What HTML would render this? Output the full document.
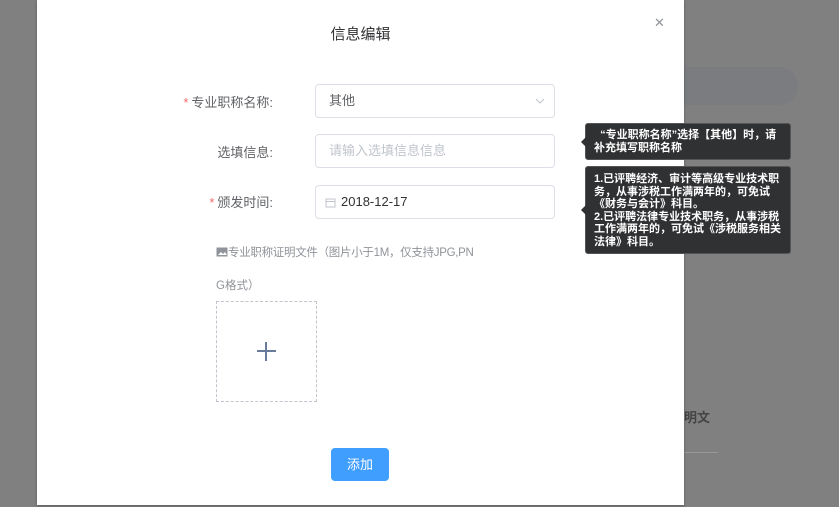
<!DOCTYPE html>
<html><head><meta charset="utf-8"><style>
*{margin:0;padding:0;box-sizing:border-box}
body{width:839px;height:507px;background:#808080;position:relative;overflow:hidden;font-family:"Liberation Sans","Noto Sans CJK SC",sans-serif;}
.a{position:absolute}
.modal{left:37px;top:0;width:647px;height:505px;background:#fff;box-shadow:0 1px 3px rgba(0,0,0,.3)}
.lbl{font-size:13px;color:#606266;text-align:right;width:120px}
.req{color:#f56c6c;margin-right:3px}
.inp{border:1px solid #dcdfe6;border-radius:4px;width:240px;height:34px;background:#fff;font-size:13px;line-height:32px;padding-left:13px;color:#606266}
.tip{background:#303133;color:#fff;font-size:11px;line-height:12.5px;border-radius:3px;padding:5px 8px;font-weight:bold;border:1px solid #555}
.tip:before{content:"";position:absolute;left:-5px;top:50%;margin-top:-5px;border:5px solid transparent;border-left:0;border-right-color:#303133}
</style></head><body>
<div class="a" style="left:684px;top:67px;width:114px;height:38px;background:#7b7c80;border-radius:0 19px 19px 0"></div>
<div class="a" style="left:684px;top:407px;font-size:13px;color:#444;font-weight:bold">明文</div>
<div class="a" style="left:684px;top:452px;width:34px;height:1px;background:#999"></div>
<div class="a modal"></div>
<div class="a" style="left:0;width:721px;top:23px;text-align:center;font-size:15px;color:#303133">信息编辑</div>
<div class="a" style="left:654px;top:15px;font-size:13px;color:#909399">✕</div>

<div class="a lbl" style="left:153px;top:92px"><span class="req">*</span>专业职称名称:</div>
<div class="a inp" style="left:315px;top:84px">其他<svg class="a" style="right:9px;top:12px" width="10" height="8"><path d="M1 2l4 4 4-4" stroke="#c0c4cc" fill="none"/></svg></div>

<div class="a lbl" style="left:153px;top:142px">选填信息:</div>
<div class="a inp" style="left:315px;top:134px;color:#c0c4cc">请输入选填信息信息</div>

<div class="a lbl" style="left:153px;top:192px"><span class="req">*</span>颁发时间:</div>
<div class="a inp" style="left:315px;top:185px;padding-left:25px;color:#303133">2018-12-17<svg class="a" style="left:9px;top:11px" width="11" height="11"><rect x="1" y="2" width="9" height="8" fill="none" stroke="#c0c4cc"/><path d="M1 4.5h9" stroke="#c0c4cc"/></svg></div>

<div class="a" style="left:216px;top:244px;font-size:11.5px;color:#909399;letter-spacing:-0.3px;white-space:nowrap"><svg width="12" height="10" style="vertical-align:-1px"><rect x="0.5" y="0.5" width="11" height="9" fill="#909399"/><path d="M2 8l3-3 2 2 2-2 2 3z" fill="#fff"/></svg>专业职称证明文件（图片小于1M，仅支持JPG,PN</div>
<div class="a" style="left:216px;top:277px;font-size:11.5px;color:#909399">G格式）</div>
<div class="a" style="left:216px;top:301px;width:101px;height:101px;border:1px dashed #c0c4cc"></div>
<div class="a" style="left:257px;top:350px;width:19px;height:1.5px;background:#6a7a9a"></div>
<div class="a" style="left:265px;top:342px;width:1.5px;height:19px;background:#6a7a9a"></div>

<div class="a" style="left:331px;top:448px;width:58px;height:33px;background:#409eff;border-radius:4px;color:#fff;font-size:13px;text-align:center;line-height:33px">添加</div>

<div class="a tip" style="left:585px;top:123px;width:206px">&nbsp;&nbsp;“专业职称名称”选择【其他】时，请补充填写职称名称</div>
<div class="a tip" style="left:585px;top:166px;width:206px;padding-top:6px;padding-bottom:5px">1.已评聘经济、审计等高级专业技术职务，从事涉税工作满两年的，可免试《财务与会计》科目。<br>2.已评聘法律专业技术职务，从事涉税工作满两年的，可免试《涉税服务相关法律》科目。</div>
</body></html>
